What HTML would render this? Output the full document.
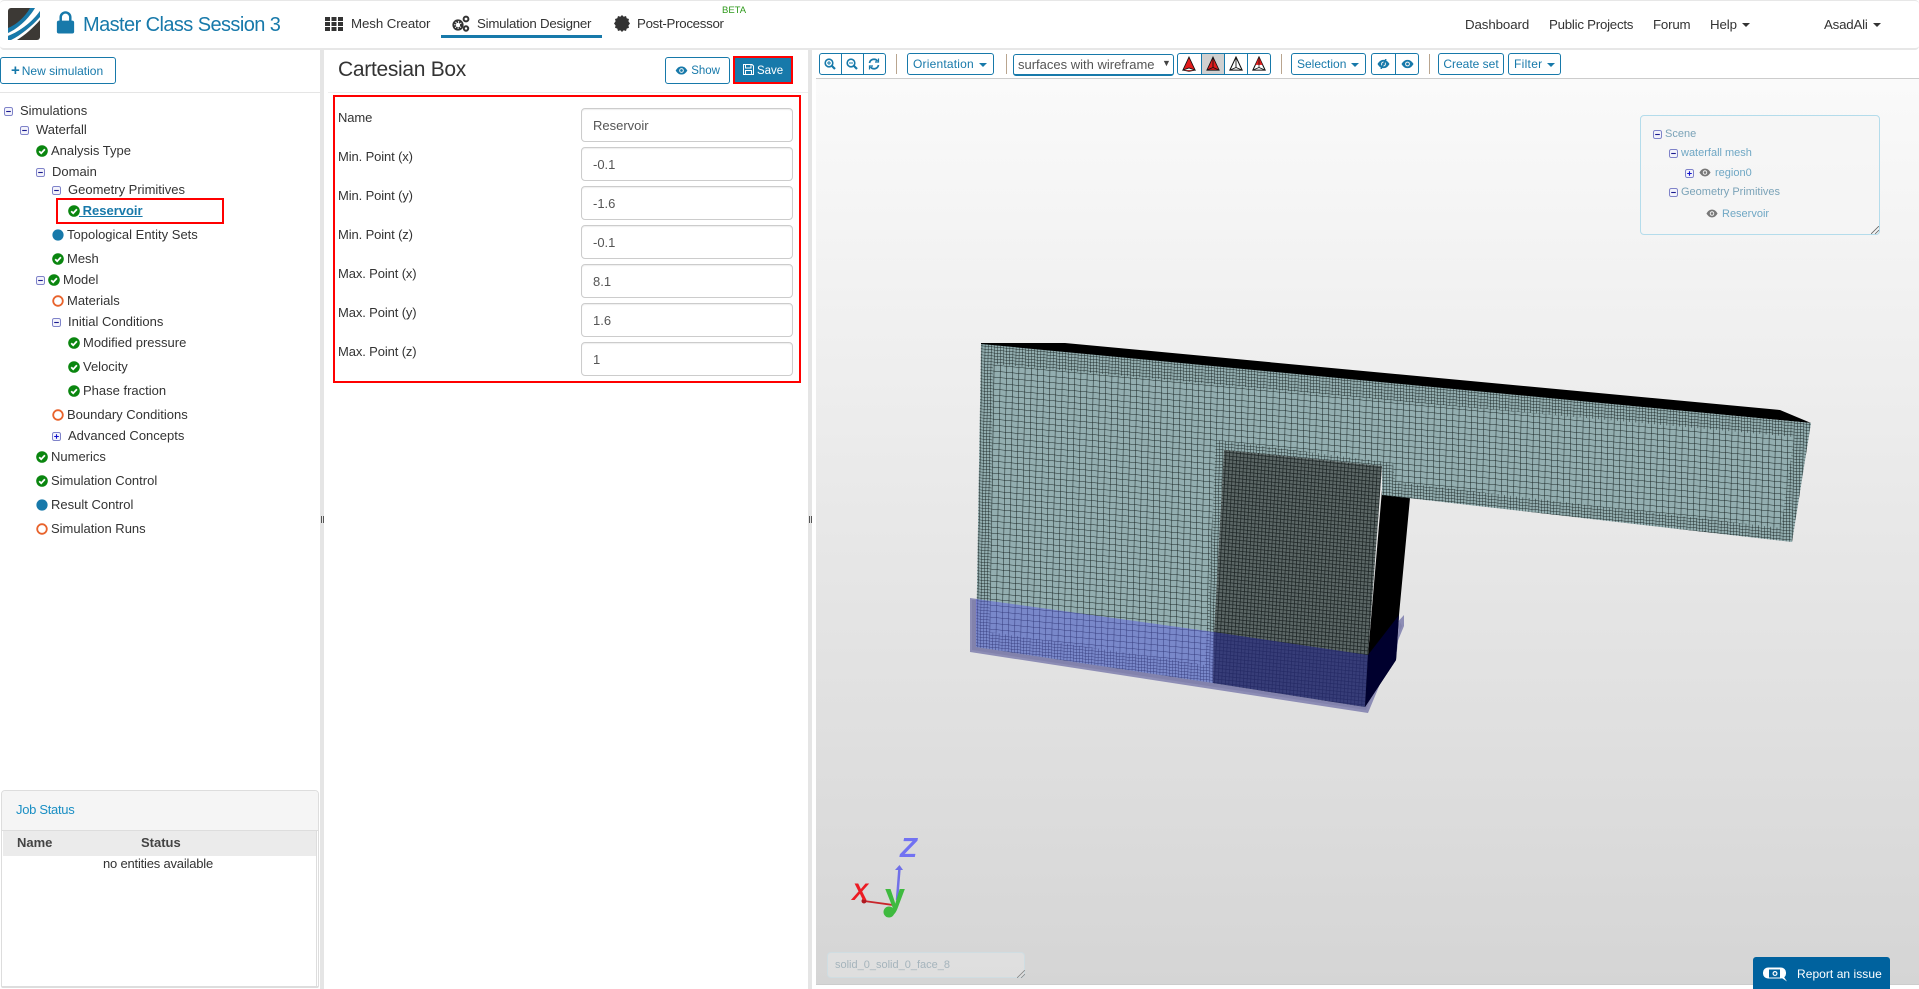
<!DOCTYPE html>
<html><head><meta charset="utf-8"><title>Master Class Session 3</title>
<style>
html,body{margin:0;padding:0;background:#fff;width:1919px;height:989px;overflow:hidden;font-family:"Liberation Sans",sans-serif;color:#333}
.t{position:absolute;white-space:nowrap;line-height:16px;font-size:13px;color:#333}
.n{font-size:13.3px;color:#333;letter-spacing:-.1px}
.b{position:absolute;box-sizing:border-box;border:1px solid #1779aa;border-radius:3px;background:#fff;color:#1779aa;font-size:12px;line-height:20px;height:22px;text-align:center;white-space:nowrap}
.g{position:absolute;background:#e5e5e5}
.sep{position:absolute;top:54px;width:1px;height:20px;background:#b9a58f}
.i{position:absolute;box-sizing:border-box;left:581px;width:212px;height:34px;border:1px solid #ccc;border-radius:4px;box-shadow:inset 0 1px 1px rgba(0,0,0,.07);font-size:13px;line-height:34px;padding-left:11px;color:#555}
.l{position:absolute;left:338px;font-size:13px;line-height:16px;color:#333;white-space:nowrap;letter-spacing:-.12px}
svg.s{position:absolute;width:12px;height:12px;overflow:visible}
svg.x{position:absolute;width:9px;height:9px;overflow:visible}
.sc{position:absolute;white-space:nowrap;font-size:11px;line-height:14px;color:#6fa7c4}
.car{display:inline-block;width:0;height:0;border-left:4px solid transparent;border-right:4px solid transparent;border-top:4px solid currentColor;vertical-align:middle;margin-left:5px}
</style></head><body>
<svg width="0" height="0" style="position:absolute">
<defs>
<symbol id="ok" viewBox="0 0 12 12"><circle cx="6" cy="6" r="5.8" fill="#0a860f"/><path d="M3.2 6.2L5.2 8.2 8.9 4.3" fill="none" stroke="#fff" stroke-width="1.8"/></symbol>
<symbol id="dot" viewBox="0 0 12 12"><circle cx="6" cy="6" r="5.6" fill="#1779aa"/></symbol>
<symbol id="ring" viewBox="0 0 12 12"><circle cx="6" cy="6" r="4.8" fill="#fff" stroke="#e8632c" stroke-width="1.8"/></symbol>
<symbol id="mi" viewBox="0 0 9 9"><rect x=".5" y=".5" width="8" height="8" rx="1.6" fill="#f3f3fb" stroke="#7f83c9"/><path d="M2.2 4.5H6.8" stroke="#1b1b8f" stroke-width="1.1"/></symbol>
<symbol id="pl" viewBox="0 0 9 9"><rect x=".5" y=".5" width="8" height="8" rx="1.6" fill="#f3f3fb" stroke="#7f83c9"/><path d="M2.2 4.5H6.8M4.5 2.2V6.8" stroke="#1111cc" stroke-width="1.1"/></symbol>
<symbol id="eye" viewBox="0 0 14 10"><path d="M0.5 5C3 1 5 .5 7 .5S11 1 13.5 5C11 9 9 9.5 7 9.5S3 9 .5 5Z" fill="currentColor"/><circle cx="7" cy="5" r="2.6" fill="#f4f4f4"/><circle cx="7" cy="5" r="1.5" fill="currentColor"/></symbol>
<symbol id="cone" viewBox="0 0 16 18"><path d="M8 1L15 16 8 13.500 1 16Z" fill="#e21b1b" stroke="#111" stroke-width="1"/><path d="M1 16L8 17.500 15 16" fill="#b01212" stroke="#111" stroke-width=".8"/></symbol>
<symbol id="cone1" viewBox="0 0 16 18"><path d="M8 1L15 16H1Z" fill="#e21b1b" stroke="#111" stroke-width="1"/><path d="M8 1V13L1 16M8 13L15 16" fill="none" stroke="#111" stroke-width="1"/></symbol>
<symbol id="cone2" viewBox="0 0 16 18"><path d="M8 1L15 16H1Z" fill="#fff" stroke="#111" stroke-width="1.2"/><path d="M8 1V13L1 16M8 13L15 16" fill="none" stroke="#111" stroke-width="1"/></symbol>
<symbol id="cone3" viewBox="0 0 16 18"><path d="M8 1L15 16H1Z" fill="#fff" stroke="#111" stroke-width="1.2"/><path d="M8 1L12 10H4Z" fill="#e21b1b"/><path d="M8 1V13L1 16M8 13L15 16" fill="none" stroke="#111" stroke-width=".8"/></symbol>
</defs>
</svg>

<!-- navbar -->
<div style="position:absolute;left:0;top:0;width:1919px;height:50px;box-sizing:border-box;border-top:1px solid #e7e7e7;border-bottom:2px solid #e7e7e7;border-radius:4px"></div>
<svg style="position:absolute;left:8px;top:8px" width="32" height="32" viewBox="0 0 32 32"><rect width="32" height="32" rx="3" fill="#3c3935"/><path d="M0 20C8 17 17 9 22 0H27C21 10 11 20 0 25Z" fill="#1779aa"/><path d="M0 25C11 20 21 10 27 0H32V3C25 13 13 23 0 28Z" fill="#fff"/><path d="M0 28C13 23 25 13 32 3V9C24 18 13 27 3 32H0Z" fill="#1779aa"/><path d="M3 32C13 27 24 18 32 9V12C25 20 17 27 9 32Z" fill="#fff"/></svg>
<svg style="position:absolute;left:56px;top:11px" width="19" height="23" viewBox="0 0 19 24"><path d="M4.500 11V6.500a5 5 0 0 1 10 0V11" fill="none" stroke="#1779aa" stroke-width="2.600"/><rect x="0.500" y="10" width="18" height="13.500" rx="2" fill="#1779aa"/></svg>
<div class="t" style="left:83px;top:13px;font-size:20px;line-height:24px;color:#1779aa;letter-spacing:-.58px">Master Class Session 3</div>

<svg style="position:absolute;left:325px;top:17px" width="18" height="14" viewBox="0 0 18 14" fill="#333"><rect width="5" height="4"/><rect x="6.500" width="5" height="4"/><rect x="13" width="5" height="4"/><rect y="5" width="5" height="4"/><rect x="6.500" y="5" width="5" height="4"/><rect x="13" y="5" width="5" height="4"/><rect y="10" width="5" height="4"/><rect x="6.500" y="10" width="5" height="4"/><rect x="13" y="10" width="5" height="4"/></svg>
<div class="t n" style="left:351px;top:16px">Mesh Creator</div>
<svg style="position:absolute;left:452px;top:15px" width="18" height="17" viewBox="0 0 18 17"><circle cx="6" cy="10" r="3.600" fill="none" stroke="#333" stroke-width="3" stroke-dasharray="2 1"/><circle cx="6" cy="10" r="4.800" fill="none" stroke="#333" stroke-width="1.600"/><circle cx="14" cy="4" r="2.400" fill="none" stroke="#333" stroke-width="2"/><circle cx="14" cy="13.500" r="2.200" fill="none" stroke="#333" stroke-width="2"/></svg>
<div class="t n" style="left:477px;top:16px;letter-spacing:-.25px">Simulation Designer</div>
<div style="position:absolute;left:441px;top:35px;width:161px;height:3px;background:#1779aa"></div>
<svg style="position:absolute;left:614px;top:15px" width="16" height="17" viewBox="0 0 16 17"><path d="M8 0l1.700 1.700L12 1l.7 2.200L15 4l-.6 2.300L16 8.500l-1.600 2 .6 2.300-2.300.8L12 16l-2.300-.7L8 17l-1.700-1.700L4 16l-.7-2.400L1 12.800l.6-2.300L0 8.500l1.600-2.200L1 4l2.300-.8L4 1l2.300.7Z" fill="#333"/></svg>
<div class="t n" style="left:637px;top:16px;letter-spacing:-.3px">Post-Processor</div>
<div class="t" style="left:722px;top:3px;font-size:9.500px;color:#2f9a1c">BETA</div>

<div class="t n" style="left:1465px;top:17px">Dashboard</div>
<div class="t n" style="left:1549px;top:17px;letter-spacing:-.25px">Public Projects</div>
<div class="t n" style="left:1653px;top:17px;letter-spacing:-.2px">Forum</div>
<div class="t n" style="left:1710px;top:17px">Help<span class="car"></span></div>
<div class="t n" style="left:1824px;top:17px;letter-spacing:-.2px">AsadAli<span class="car"></span></div>

<!-- gutters -->
<div class="g" style="left:320px;top:50px;width:4px;height:939px"></div>
<div class="g" style="left:808px;top:50px;width:4px;height:939px"></div>
<div style="position:absolute;left:321px;top:516px;width:1px;height:7px;background:#555"></div>
<div style="position:absolute;left:323px;top:516px;width:1px;height:7px;background:#555"></div>
<div style="position:absolute;left:809px;top:516px;width:1px;height:7px;background:#555"></div>
<div style="position:absolute;left:811px;top:516px;width:1px;height:7px;background:#555"></div>

<!-- left panel -->
<div class="b" style="left:0;top:57px;width:116px;height:27px;line-height:25px;text-align:left;padding-left:10px"><b style="font-size:15px;margin-right:2px">+</b>New simulation</div>
<div style="position:absolute;left:0;top:92px;width:320px;height:1px;background:#e5e5e5"></div>

<svg class="x" style="left:4px;top:107px"><use href="#mi"/></svg><div class="t" style="left:20px;top:103px">Simulations</div>
<svg class="x" style="left:20px;top:126px"><use href="#mi"/></svg><div class="t" style="left:36px;top:122px">Waterfall</div>
<svg class="s" style="left:36px;top:145px"><use href="#ok"/></svg><div class="t" style="left:51px;top:143px">Analysis Type</div>
<svg class="x" style="left:36px;top:168px"><use href="#mi"/></svg><div class="t" style="left:52px;top:164px">Domain</div>
<svg class="x" style="left:52px;top:186px"><use href="#mi"/></svg><div class="t" style="left:68px;top:182px">Geometry Primitives</div>
<div style="position:absolute;left:56px;top:198px;width:168px;height:26px;box-sizing:border-box;border:2px solid #f00"></div>
<svg class="s" style="left:68px;top:205px"><use href="#ok"/></svg><div class="t" style="left:79px;top:203px;color:#1779aa;font-weight:bold;text-decoration:underline;font-size:13px">&nbsp;Reservoir</div>
<svg class="s" style="left:52px;top:229px"><use href="#dot"/></svg><div class="t" style="left:67px;top:227px">Topological Entity Sets</div>
<svg class="s" style="left:52px;top:253px"><use href="#ok"/></svg><div class="t" style="left:67px;top:251px">Mesh</div>
<svg class="x" style="left:36px;top:276px"><use href="#mi"/></svg><svg class="s" style="left:48px;top:274px"><use href="#ok"/></svg><div class="t" style="left:63px;top:272px">Model</div>
<svg class="s" style="left:52px;top:295px"><use href="#ring"/></svg><div class="t" style="left:67px;top:293px">Materials</div>
<svg class="x" style="left:52px;top:318px"><use href="#mi"/></svg><div class="t" style="left:68px;top:314px">Initial Conditions</div>
<svg class="s" style="left:68px;top:337px"><use href="#ok"/></svg><div class="t" style="left:83px;top:335px">Modified pressure</div>
<svg class="s" style="left:68px;top:361px"><use href="#ok"/></svg><div class="t" style="left:83px;top:359px">Velocity</div>
<svg class="s" style="left:68px;top:385px"><use href="#ok"/></svg><div class="t" style="left:83px;top:383px">Phase fraction</div>
<svg class="s" style="left:52px;top:409px"><use href="#ring"/></svg><div class="t" style="left:67px;top:407px">Boundary Conditions</div>
<svg class="x" style="left:52px;top:432px"><use href="#pl"/></svg><div class="t" style="left:68px;top:428px">Advanced Concepts</div>
<svg class="s" style="left:36px;top:451px"><use href="#ok"/></svg><div class="t" style="left:51px;top:449px">Numerics</div>
<svg class="s" style="left:36px;top:475px"><use href="#ok"/></svg><div class="t" style="left:51px;top:473px">Simulation Control</div>
<svg class="s" style="left:36px;top:499px"><use href="#dot"/></svg><div class="t" style="left:51px;top:497px">Result Control</div>
<svg class="s" style="left:36px;top:523px"><use href="#ring"/></svg><div class="t" style="left:51px;top:521px">Simulation Runs</div>

<!-- job status -->
<div style="position:absolute;left:1px;top:790px;width:318px;height:198px;box-sizing:border-box;border:1px solid #ddd;border-radius:4px 4px 2px 2px;border-bottom-width:2px">
 <div style="position:absolute;left:0;top:0;width:316px;height:39px;background:#f5f5f5;border-bottom:1px solid #ddd;border-radius:3px 3px 0 0"></div>
 <div style="position:absolute;left:1px;top:40px;width:313px;height:25px;background:#ebebeb"></div>
 <div style="position:absolute;left:314px;top:40px;width:1px;height:156px;background:#ddd"></div>
</div>
<div class="t" style="left:16px;top:802px;font-size:13px;color:#1a8fc4;letter-spacing:-.3px">Job Status</div>
<div class="t" style="left:17px;top:835px;font-size:13px;font-weight:bold;color:#444">Name</div>
<div class="t" style="left:141px;top:835px;font-size:13px;font-weight:bold;color:#444">Status</div>
<div class="t" style="left:103px;top:856px;font-size:13px;letter-spacing:-.2px">no entities available</div>

<!-- middle panel -->
<div class="t" style="left:338px;top:57px;font-size:21px;line-height:26px;color:#333;letter-spacing:-.3px">Cartesian Box</div>
<div class="b" style="left:665px;top:57px;width:65px;height:27px;line-height:27px;font-size:11.500px"><svg style="vertical-align:-1px;color:#1779aa" width="13" height="9"><use href="#eye"/></svg> Show</div>
<div class="b" style="left:733px;top:56px;width:60px;height:28px;line-height:26px;font-size:11.500px;background:#1779aa;color:#fff;border:2px solid #f00;border-radius:0"><svg width="11" height="11" viewBox="0 0 11 11" style="vertical-align:-1px"><path d="M.5.5H9L10.500 2V10.500H.5Z M2.500.5V4H8V.5 M2.500 10.500V6.500H8.500V10.500" fill="none" stroke="#fff"/></svg> Save</div>
<div style="position:absolute;left:328px;top:92px;width:480px;height:1px;background:#eee"></div>
<div style="position:absolute;left:333px;top:95px;width:468px;height:288px;box-sizing:border-box;border:2px solid #f00"></div>
<div class="l" style="top:110px">Name</div><div class="i" style="top:108px">Reservoir</div>
<div class="l" style="top:149px">Min. Point (x)</div><div class="i" style="top:147px">-0.1</div>
<div class="l" style="top:188px">Min. Point (y)</div><div class="i" style="top:186px">-1.6</div>
<div class="l" style="top:227px">Min. Point (z)</div><div class="i" style="top:225px">-0.1</div>
<div class="l" style="top:266px">Max. Point (x)</div><div class="i" style="top:264px">8.1</div>
<div class="l" style="top:305px">Max. Point (y)</div><div class="i" style="top:303px">1.6</div>
<div class="l" style="top:344px">Max. Point (z)</div><div class="i" style="top:342px">1</div>

<!-- toolbar -->
<div class="b" style="left:819px;top:53px;width:67px"></div>
<div style="position:absolute;left:841px;top:53px;width:1px;height:22px;background:#1779aa"></div>
<div style="position:absolute;left:863px;top:53px;width:1px;height:22px;background:#1779aa"></div>
<svg style="position:absolute;left:824px;top:58px;color:#1779aa" width="12" height="12" viewBox="0 0 12 12" fill="none" stroke="currentColor"><circle cx="5" cy="5" r="3.800" stroke-width="1.600"/><path d="M8 8L11 11" stroke-width="2.200"/><path d="M3 5H7M5 3V7"/></svg>
<svg style="position:absolute;left:846px;top:58px;color:#1779aa" width="12" height="12" viewBox="0 0 12 12" fill="none" stroke="currentColor"><circle cx="5" cy="5" r="3.800" stroke-width="1.600"/><path d="M8 8L11 11" stroke-width="2.200"/><path d="M3 5H7"/></svg>
<svg style="position:absolute;left:868px;top:58px;color:#1779aa" width="12" height="12" viewBox="0 0 12 12" fill="none" stroke="currentColor" stroke-width="1.700"><path d="M1.500 5A4.500 4.500 0 0 1 9.500 3M10.500 7A4.500 4.500 0 0 1 2.500 9"/><path d="M10.500 .5V4H7M1.500 11.500V8H5" stroke-width="1.200"/></svg>
<div class="sep" style="left:896px"></div>
<div class="b" style="left:907px;top:53px;width:87px;text-align:left;padding-left:5px;letter-spacing:.2px">Orientation<span class="car"></span></div>
<div class="sep" style="left:1006px"></div>
<div class="b" style="left:1013px;top:54px;width:161px;text-align:left;padding-left:4px;font-size:13px;color:#555;border-width:1.500px 1px 2px 1px">surfaces with wireframe<span style="position:absolute;left:148px;top:-2px;font-size:9px;color:#444">▼</span></div>
<div class="b" style="left:1177px;top:53px;width:94px"></div>
<div style="position:absolute;left:1201px;top:54px;width:23px;height:20px;background:#d0d0d0"></div>
<div style="position:absolute;left:1201px;top:53px;width:1px;height:22px;background:#1779aa"></div>
<div style="position:absolute;left:1224px;top:53px;width:1px;height:22px;background:#1779aa"></div>
<div style="position:absolute;left:1247px;top:53px;width:1px;height:22px;background:#1779aa"></div>
<svg style="position:absolute;left:1182px;top:56px" width="14" height="16"><use href="#cone"/></svg>
<svg style="position:absolute;left:1206px;top:56px" width="14" height="16"><use href="#cone1"/></svg>
<svg style="position:absolute;left:1229px;top:56px" width="14" height="16"><use href="#cone2"/></svg>
<svg style="position:absolute;left:1252px;top:56px" width="14" height="16"><use href="#cone3"/></svg>
<div class="sep" style="left:1281px"></div>
<div class="b" style="left:1291px;top:53px;width:75px;text-align:left;padding-left:5px">Selection<span class="car"></span></div>
<div class="b" style="left:1371px;top:53px;width:48px"></div>
<div style="position:absolute;left:1395px;top:53px;width:1px;height:22px;background:#1779aa"></div>
<svg style="position:absolute;left:1377px;top:59px;color:#1779aa" width="13" height="10"><use href="#eye"/><path d="M9 0L4 10" stroke="#1779aa" stroke-width="1.500"/></svg>
<svg style="position:absolute;left:1401px;top:59px;color:#1779aa" width="13" height="10"><use href="#eye"/></svg>
<div class="sep" style="left:1429px"></div>
<div class="b" style="left:1438px;top:53px;width:66px">Create set</div>
<div class="b" style="left:1508px;top:53px;width:53px;text-align:left;padding-left:5px;letter-spacing:.3px">Filter<span class="car"></span></div>

<!-- canvas -->
<div style="position:absolute;left:816px;top:78px;width:1103px;height:907px;box-sizing:border-box;border-top:1px solid #ccc;border-bottom:1px solid #ccc;background:linear-gradient(#fafafa,#d5d5d5)"></div>

<svg style="position:absolute;left:0;top:0" width="1919" height="989" viewBox="0 0 1919 989">
<defs>
<pattern id="c" width="6.200" height="6" patternUnits="userSpaceOnUse" patternTransform="matrix(1 .095 -.016 1 0 0)"><path d="M0 0H6.200M0 0V6" stroke="#15201f" stroke-width="1"/></pattern>
<pattern id="f" width="3.100" height="3" patternUnits="userSpaceOnUse" patternTransform="matrix(1 .095 -.016 1 0 0)"><path d="M0 0H3.100M0 0V3" stroke="#15201f" stroke-width=".9"/></pattern>
<pattern id="d" width="3.600" height="3.600" patternUnits="userSpaceOnUse" patternTransform="matrix(1 .1 -.05 1 0 0)"><path d="M0 0H3.600M0 0V3.600" stroke="#182020" stroke-width="1.400"/></pattern>
</defs>
<!-- blue rim behind -->
<polygon points="970,598 1214,632 1368,655 1404,615 1404,626 1368,713 970,652" fill="#8d8db5"/>
<polygon points="972,600 976,600 976,647 1213,683 1365,707 1396,660 1400,622 1402,626 1366,710 972,650" fill="#8282ac"/>
<!-- top black -->
<polygon points="981,343 1065,343 1780,410 1811,423 981,345" fill="#000"/>
<!-- black pillar -->
<polygon points="1382,490 1410,498 1399,615 1396,660 1365,707 1368,655" fill="#000"/>
<!-- front face -->
<polygon points="981,344 1811,423 1792,542 1382,495 1382,466 1224,450 1214,634 1213,683 976,647" fill="#93aeb0"/>
<polygon points="981,344 1811,423 1792,542 1382,495 1382,466 1224,450 1214,634 1213,683 976,647" fill="url(#f)"/>
<polygon points="993,364 1794,437 1781,528 1395,482 1393,463 1216,440 1205,665 990,632" fill="#93aeb0"/>
<polygon points="993,364 1794,437 1781,528 1395,482 1393,463 1216,440 1205,665 990,632" fill="url(#c)"/>
<!-- dark face -->
<polygon points="1224,450 1382,466 1368,655 1365,707 1213,683 1214,634" fill="#5c6766"/>
<polygon points="1224,450 1382,466 1368,655 1365,707 1213,683 1214,634" fill="url(#d)"/>
<!-- blue overlays -->
<polygon points="976,599 1214,632 1213,683 976,647" fill="rgb(90,90,235)" fill-opacity=".45"/>
<polygon points="1214,632 1368,655 1365,707 1213,683" fill="#2a2e80" fill-opacity=".72"/>
<polygon points="1368,655 1399,615 1396,660 1365,707" fill="#00002e"/>
<!-- axes -->
<path d="M897 900L899.500 868" stroke="#7070e8" stroke-width="2.500"/><path d="M895 870L899.500 865 903 870Z" fill="#7070e8"/>
<path d="M864 901L893 905" stroke="#c8262c" stroke-width="1.800"/><circle cx="864" cy="901" r="2.500" fill="#b01820"/>
<text x="900" y="857" font-family="Liberation Sans" font-size="28" font-style="italic" font-weight="bold" fill="#7272f2">Z</text>
<text x="852" y="900" font-family="Liberation Sans" font-size="24" font-style="italic" font-weight="bold" fill="#ec1c24">X</text>
<text x="885" y="908" font-family="Liberation Sans" font-size="36" font-weight="bold" fill="#3fba3f">y</text>
<circle cx="889" cy="912" r="5.500" fill="#3fba3f"/>
</svg>

<!-- scene box -->
<div style="position:absolute;left:1640px;top:115px;width:240px;height:120px;box-sizing:border-box;border:1px solid #b4dceb;border-radius:4px;background:rgba(245,245,245,.9)"></div>
<svg class="x" style="left:1653px;top:130px"><use href="#mi"/></svg><div class="sc" style="left:1665px;top:127px;color:#7ba3b8">Scene</div>
<svg class="x" style="left:1669px;top:149px"><use href="#mi"/></svg><div class="sc" style="left:1681px;top:146px">waterfall mesh</div>
<svg class="x" style="left:1685px;top:169px"><use href="#pl"/></svg><svg style="position:absolute;left:1699px;top:168px;color:#777" width="12" height="9"><use href="#eye"/></svg><div class="sc" style="left:1715px;top:166px">region0</div>
<svg class="x" style="left:1669px;top:188px"><use href="#mi"/></svg><div class="sc" style="left:1681px;top:185px;color:#7ba3b8">Geometry Primitives</div>
<svg style="position:absolute;left:1706px;top:209px;color:#777" width="12" height="9"><use href="#eye"/></svg><div class="sc" style="left:1722px;top:207px">Reservoir</div>
<svg style="position:absolute;left:1871px;top:226px" width="8" height="8"><path d="M0 8L8 0M4 8L8 4" stroke="#666" stroke-width=".8"/></svg>

<!-- face name -->
<div style="position:absolute;left:827px;top:952px;width:198px;height:26px;box-sizing:border-box;border:1px solid #cfdde2;border-radius:4px;background:rgba(255,255,255,.22)"></div>
<div class="sc" style="left:835px;top:958px;color:#a5b4bc">solid_0_solid_0_face_8</div>
<svg style="position:absolute;left:1017px;top:970px" width="8" height="8"><path d="M0 8L8 0M4 8L8 4" stroke="#888" stroke-width=".8"/></svg>

<!-- report -->
<div style="position:absolute;left:1753px;top:957px;width:137px;height:32px;background:#00629e;border-radius:3px 3px 0 0"></div>
<svg style="position:absolute;left:1763px;top:966px" width="25" height="16" viewBox="0 0 25 15"><rect x="0" y="1" width="23" height="11" rx="5" fill="#fff"/><path d="M18 11L24 15 20 9Z" fill="#fff"/><rect x="6" y="3" width="11" height="8" fill="#00629e"/><circle cx="12" cy="7" r="2.500" fill="#fff"/><circle cx="12" cy="7" r="1.300" fill="#00629e"/></svg>
<div class="t" style="left:1797px;top:966px;font-size:12px;color:#fff;letter-spacing:.05px">Report an issue</div>
</body></html>
